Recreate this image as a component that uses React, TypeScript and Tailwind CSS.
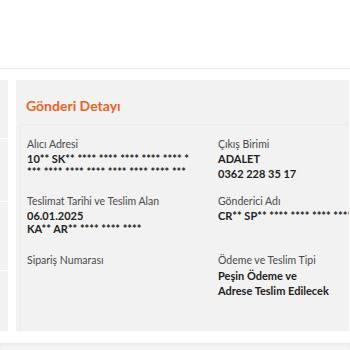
const font = "[font-family:Lato,'Open_Sans',sans-serif]";
const label = `text-[10.5px] leading-[14px] text-[#4a4a4a] ${font}`;
const value = `whitespace-nowrap text-[11px] font-bold leading-[15px] text-[#222] ${font}`;

export default function App() {
  return (
    <div className="h-[350px] w-[350px] overflow-hidden bg-white">
      <header className="h-[69px] border-b border-[#ececec] bg-white" />

      <div className="mt-[11px] flex h-[251px] gap-2 pr-[1px]">
        <aside className="flex w-2 flex-col gap-[1px]">
          <div className="h-[58px] bg-[#f2f2f2]" />
          <div className="h-[62px] bg-[#f2f2f2]" />
          <div className="h-[68px] bg-[#f2f2f2]" />
          <div className="flex-1 bg-[#f2f2f2]" />
        </aside>

        <main className="flex min-w-0 flex-1 flex-col overflow-hidden bg-[#f2f2f2]">
          <h1 className={`h-[44px] pl-[10px] pt-[17px] text-[14px] font-bold leading-[18px] text-[#e8641e] ${font}`}>
            Gönderi Detayı
          </h1>
          <div className="ml-1 flex-1 border-l border-t border-[#ebebeb] pl-[6px] pt-[12px]">
            <div className="grid grid-cols-[191px_1fr]">
              <div className="h-[57px] overflow-hidden pr-2">
                <p className={label}>Alıcı Adresi</p>
                <p className={value}>10** SK** **** **** **** **** **** *</p>
                <p className={value + " -mt-[2px]"}>*** **** **** **** **** **** **** ***</p>
              </div>
              <div className="min-w-0">
                <p className={label}>Çıkış Birimi</p>
                <p className={value}>ADALET</p>
                <p className={value}>0362 228 35 17</p>
              </div>

              <div className="h-[59px] overflow-hidden pr-2">
                <p className={label}>Teslimat Tarihi ve Teslim Alan</p>
                <p className={value}>06.01.2025</p>
                <p className={value + " -mt-[2px]"}>KA** AR** **** **** ****</p>
              </div>
              <div className="min-w-0 overflow-hidden">
                <p className={label}>Gönderici Adı</p>
                <p className={value}>CR** SP** **** **** **** **** ****</p>
              </div>

              <div>
                <p className={label}>Sipariş Numarası</p>
              </div>
              <div>
                <p className={label}>Ödeme ve Teslim Tipi</p>
                <p className={value + " mt-[1px]"}>Peşin Ödeme ve</p>
                <p className={value}>Adrese Teslim Edilecek</p>
              </div>
            </div>
          </div>
        </main>
      </div>

      <div className="mt-[12px] h-[8px] bg-[#f4f4f4] shadow-[inset_0_2px_3px_rgba(0,0,0,0.04)]" />
    </div>
  );
}
